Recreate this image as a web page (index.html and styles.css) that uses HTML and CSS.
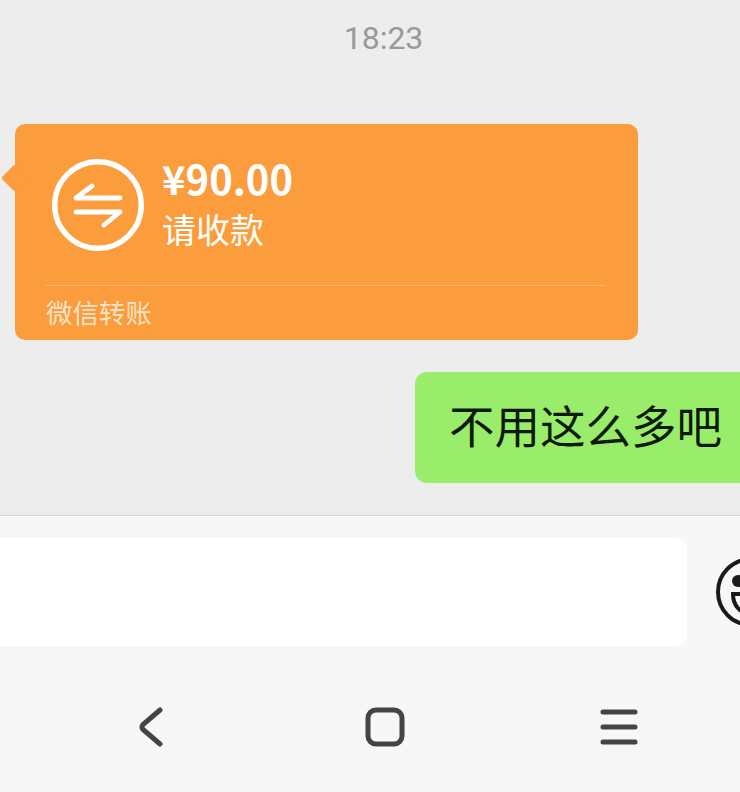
FILE: index.html
```html
<!DOCTYPE html>
<html lang="zh-CN">
<head>
  <meta charset="UTF-8">
  <title>聊天</title>
  <link rel="stylesheet" href="styles.css">
</head>
<body>
  <div class="chat">
    <div class="time">18:23</div>

    <div class="transfer">
      <span class="tail"></span>
      <div class="transfer-main">
        <svg class="transfer-icon" width="92" height="92" viewBox="0 0 92 92">
          <circle cx="46" cy="46" r="43.300" fill="none" stroke="#fff" stroke-width="5.400"/>
          <path d="M24 39H68M24 39L40 27M68 53H24M68 53L52 66" fill="none" stroke="#fff" stroke-width="4.800" stroke-linecap="round" stroke-linejoin="round"/>
        </svg>
        <div class="transfer-text">
          <div class="amount">¥90.00</div>
          <div class="status">请收款</div>
        </div>
      </div>
      <div class="transfer-foot">微信转账</div>
    </div>

    <div class="row-right">
      <div class="bubble">不用这么多吧</div>
    </div>
  </div>

  <div class="input-bar">
    <div class="input"></div>
    <svg class="emoji" width="70" height="70" viewBox="0 0 70 70">
      <circle cx="35" cy="35" r="33" fill="none" stroke="#1a1a1a" stroke-width="4"/>
      <circle cx="22" cy="24" r="6" fill="#1a1a1a"/>
      <path d="M17 37H53C53 49 45 57 35 57S17 49 17 37Z" fill="none" stroke="#1a1a1a" stroke-width="4"/>
    </svg>
  </div>

  <div class="nav">
    <svg width="24" height="40" viewBox="0 0 24 40">
      <path d="M21 3L4 17.500Q2 20 4 22.500L21 37" fill="none" stroke="#444" stroke-width="5" stroke-linecap="round"/>
    </svg>
    <svg width="40" height="40" viewBox="0 0 40 40">
      <rect x="3" y="3" width="34" height="34" rx="8" fill="none" stroke="#444" stroke-width="5"/>
    </svg>
    <svg width="38" height="38" viewBox="0 0 38 38">
      <path d="M3 4H35M3 19H35M3 34H35" fill="none" stroke="#444" stroke-width="5" stroke-linecap="round"/>
    </svg>
  </div>
</body>
</html>
```

FILE: styles.css
```css
html, body {
  margin: 0;
  padding: 0;
}
body {
  width: 740px;
  height: 792px;
  overflow: hidden;
  background-color: #f7f7f7;
  font-family: "Noto Sans CJK SC", "Noto Sans", sans-serif;
}
.chat {
  height: 516px;
  box-sizing: border-box;
  padding-top: 18px;
  background-color: #ededed;
  border-bottom: 1px solid #d6d6d6;
}
.time {
  height: 40px;
  line-height: 40px;
  margin-left: 27px;
  text-align: center;
  font-family: Roboto, sans-serif;
  font-size: 32px;
  color: #999;
}
.transfer {
  position: relative;
  width: 623px;
  height: 216px;
  margin: 66px 0 0 15px;
  box-sizing: border-box;
  padding: 35px 32px 0 31px;
  border-radius: 10px;
  background-color: #fb9c3d;
}
.tail {
  position: absolute;
  left: -10px;
  top: 44px;
  width: 20px;
  height: 20px;
  border-radius: 3px;
  background-color: #fb9c3d;
  transform: rotate(45deg);
}
.transfer-main {
  display: flex;
  gap: 18px;
  height: 127px;
  padding-left: 6px;
  box-sizing: border-box;
  border-bottom: 1px solid #fdb56d;
}
.amount {
  height: 44px;
  margin-top: -3px;
  line-height: 44px;
  font-size: 40px;
  font-weight: 700;
  color: #fff;
}
.status {
  height: 44px;
  margin-top: 7px;
  line-height: 44px;
  font-size: 34px;
  color: #fff;
}
.transfer-foot {
  margin-top: 7px;
  line-height: 38px;
  font-size: 26.500px;
  color: #fde3c6;
}
.row-right {
  display: flex;
  justify-content: flex-end;
  margin-top: 32px;
}
.bubble {
  width: 325px;
  height: 111px;
  box-sizing: border-box;
  padding-left: 34px;
  line-height: 105px;
  font-size: 45.500px;
  white-space: nowrap;
  color: #0c1a06;
  border-radius: 12px 0 0 12px;
  background-color: #99ed6b;
}
.input-bar {
  display: flex;
  align-items: flex-start;
  gap: 29px;
  height: 130px;
  box-sizing: border-box;
  padding-top: 22px;
  overflow: hidden;
}
.input {
  flex: none;
  width: 687px;
  height: 108px;
  border-radius: 0 12px 12px 0;
  background-color: #fff;
}
.emoji {
  flex: none;
  margin-top: 19px;
}
.nav {
  display: grid;
  grid-template-columns: 226px 235px 1fr;
  align-items: center;
  height: 146px;
  padding: 16px 0 0 139px;
  box-sizing: border-box;
}
```
